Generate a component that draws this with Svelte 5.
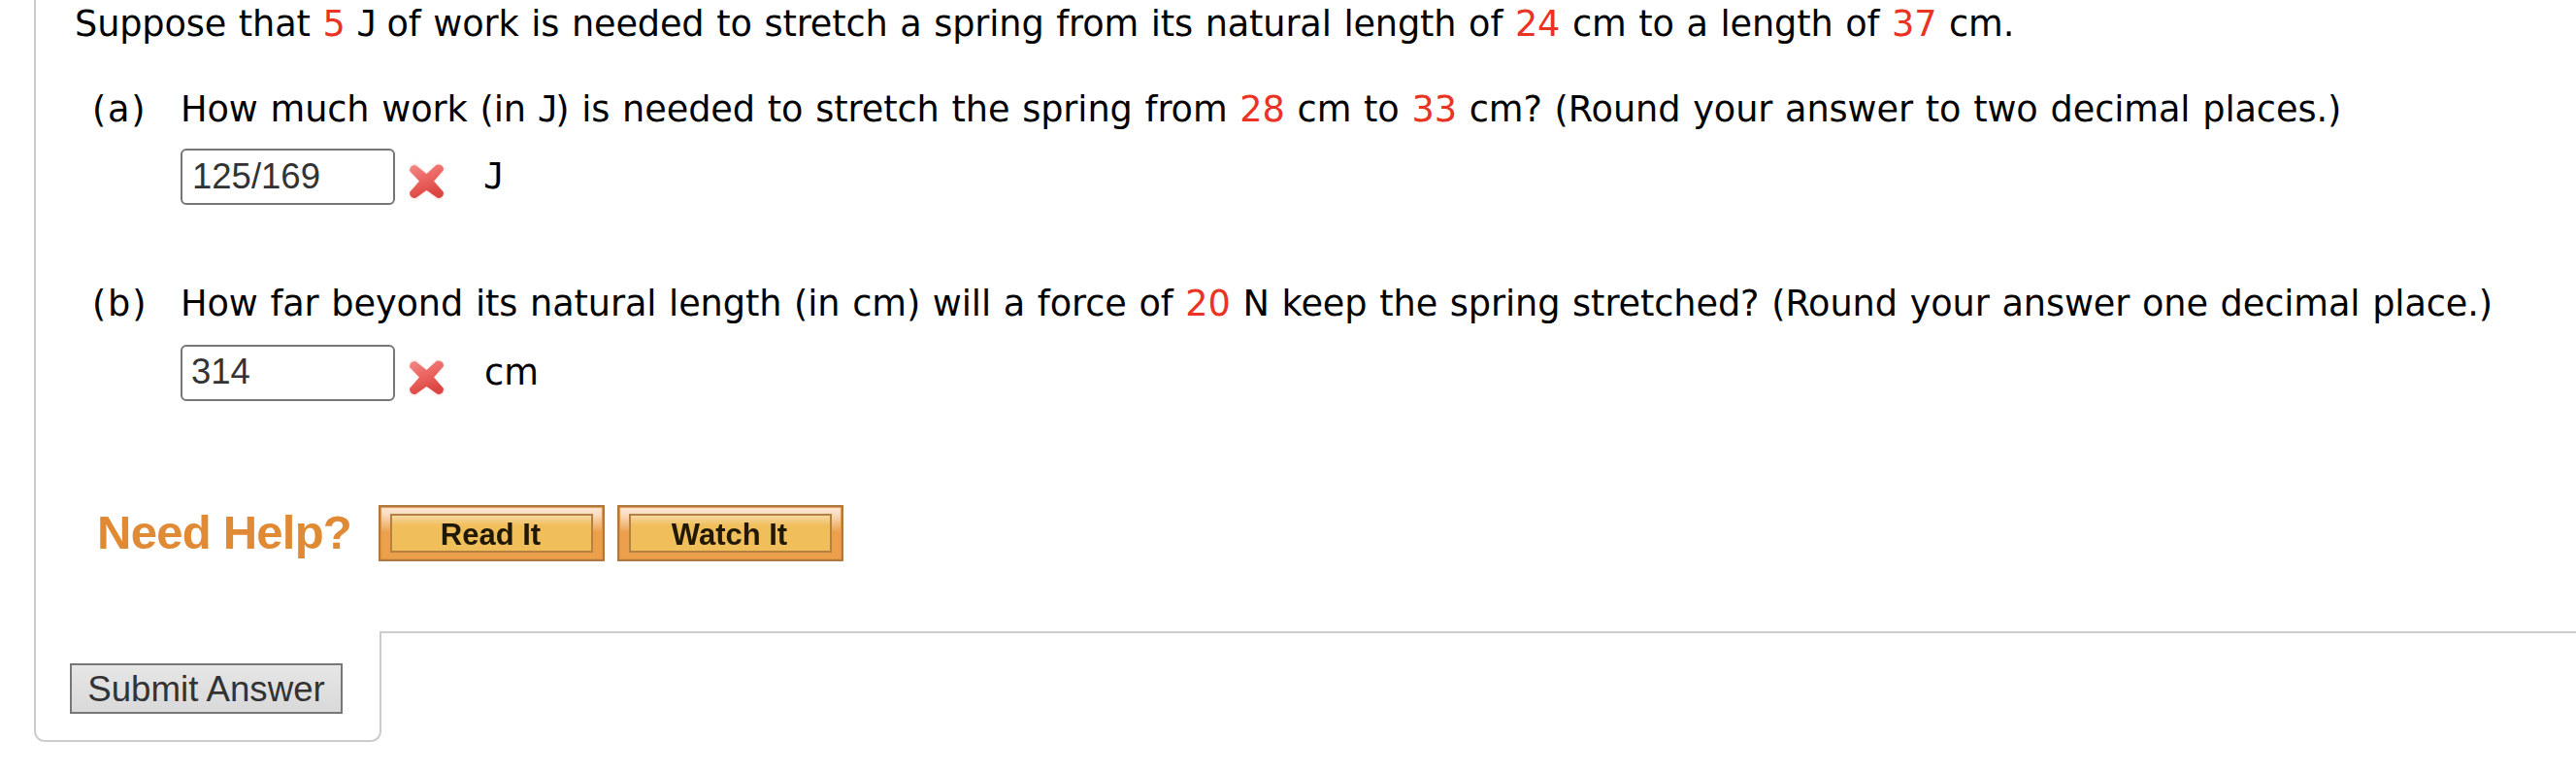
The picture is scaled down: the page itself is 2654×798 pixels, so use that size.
<script>
    let answers = $state({ a: '125/169', b: '314' });
</script>

{#snippet wrong()}
    <svg class="wrong" viewBox="0 0 40 42" aria-label="Incorrect">
        <defs>
            <linearGradient id="cross" x1="0" y1="0" x2="0.35" y2="1">
                <stop offset="0" stop-color="#f08a87" />
                <stop offset="0.5" stop-color="#ec6663" />
                <stop offset="1" stop-color="#dc4642" />
            </linearGradient>
        </defs>
        <path class="wrong-halo" d="M8 8L33 34M33 8L8 34" />
        <path class="wrong-mark" fill="url(#cross)" d="M3 10Q3 4 9 4L20.500 13L31 3.500Q38 3 38 9L28 20.500L38 32Q38 38 32 38L20.500 30L9 38Q3 38 3 32L13 20.500Z" />
    </svg>
{/snippet}

<main class="question">
    <section class="panel">
        <p class="intro">Suppose that <em>5</em> <span class="joule">J</span> of work is needed to stretch a spring from its natural length of <em>24</em> cm to a length of <em>37</em> cm.</p>

        <div class="part part-a">
            <span class="label">(a)</span>
            <div class="body">
                <p class="line-a">How much work (in <span class="joule">J</span>) is needed to stretch the spring from <em>28</em> cm to <em>33</em> cm? (Round your answer to two decimal places.)</p>
                <div class="answer">
                    <input type="text" bind:value={answers.a} aria-label="Answer a">
                    {@render wrong()}
                    <span class="unit"><span class="joule">J</span></span>
                </div>
            </div>
        </div>

        <div class="part part-b">
            <span class="label">(b)</span>
            <div class="body">
                <p class="line-b">How far beyond its natural length (in cm) will a force of <em>20</em> N keep the spring stretched? (Round your answer one decimal place.)</p>
                <div class="answer">
                    <input class="second" type="text" bind:value={answers.b} aria-label="Answer b">
                    {@render wrong()}
                    <span class="unit">cm</span>
                </div>
            </div>
        </div>

        <div class="help">
            <strong class="help-title">Need Help?</strong>
            <button class="help-btn"><span><b>Read It</b></span></button>
            <button class="help-btn"><span><b>Watch It</b></span></button>
        </div>
    </section>

    <div class="footer">
        <div class="tab">
            <button class="submit">Submit Answer</button>
        </div>
        <div class="rule"></div>
    </div>
</main>

<style>
:global(body) {
    background: #fff;
    overflow: hidden;
}

.question {
    box-sizing: border-box;
    height: 798px;
    padding-left: 35px;
    font-family: "DejaVu Sans", Verdana, sans-serif;
    font-size: 36.67px;
    line-height: 44px;
    word-spacing: 1.2px;
    color: #000;
    white-space: nowrap;
}

.panel {
    box-sizing: border-box;
    height: 650px;
    padding: 3px 0 0 39px;
    border-left: 2px solid #ccc;
}

p {
    margin: 0;
    padding-left: 1px;
}

.intro {
    letter-spacing: -0.14px;
}

.line-a {
    letter-spacing: -0.08px;
}

.line-b {
    letter-spacing: -0.1px;
}

em {
    font-style: normal;
    color: #ea3323;
}

/* J with a top bar, narrowed to the width of the text face */
.joule {
    display: inline-block;
    width: 17.5px;
    font-family: "DejaVu Sans Mono", monospace;
    text-indent: -1px;
    letter-spacing: 0;
}

.part {
    display: flex;
    padding-left: 19px;
}

.part-a {
    margin-top: 44px;
}

.part-b {
    margin-top: 80px;
}

.label {
    width: 90px;
    letter-spacing: 1.8px;
}

.answer {
    display: flex;
    height: 58px;
    margin-top: 18px;
}

.part-b .answer {
    margin-top: 20px;
}

input {
    box-sizing: border-box;
    width: 221px;
    height: 58px;
    margin: 0 0 0 1px;
    padding: 0 10px;
    border: 2px solid #767676;
    border-radius: 6px;
    background: #fff;
    font: 36.5px "Liberation Sans", Arial, sans-serif;
    color: #333;
    outline: none;
}

input.second {
    padding: 0 12px 3px 9px;
}

.wrong {
    width: 40px;
    height: 42px;
    margin: 13px 0 0 12px;
}

.wrong-halo {
    fill: none;
    stroke: #fbe3e2;
    stroke-width: 11;
    stroke-linecap: round;
    filter: blur(1px);
}

.wrong-mark {
    filter: blur(0.6px);
}

.unit {
    margin: 7px 0 0 40px;
}

.help {
    display: flex;
    gap: 13px;
    margin-top: 107px;
    font-family: "Liberation Sans", Arial, sans-serif;
    word-spacing: 0;
}

.help-title {
    width: 266px;
    padding-left: 24px;
    box-sizing: border-box;
    margin-top: 6px;
    margin-right: 35px;
    font-size: 49px;
    letter-spacing: -0.75px;
    color: #e08a35;
    filter: blur(0.7px);
}

.help-btn {
    box-sizing: border-box;
    width: 233px;
    height: 58px;
    padding: 7px 10px;
    border: 2px solid #ae7a42;
    background: linear-gradient(#fbe9d8, #f9dcc0 15%, #eda04c 48%, #eda04c);
    box-shadow: inset 0 0 1px 1px #dc9446;
    color: #1f1803;
}

.help-btn span {
    display: block;
    box-sizing: border-box;
    height: 40px;
    border: 2px solid #b58040;
    background: linear-gradient(#f6d9a4, #f1be5c 28%, #f1be5c);
    font: bold 31px/39px "Liberation Sans", Arial, sans-serif;
}

.help-btn b {
    display: block;
    margin-left: -2px;
    filter: blur(0.7px);
}

.footer {
    display: flex;
}

.tab {
    box-sizing: border-box;
    width: 358px;
    height: 114px;
    padding: 33px 0 0 35px;
    border: 2px solid #ccc;
    border-top: 0;
    border-radius: 0 0 11px 11px;
}

.submit {
    display: block;
    box-sizing: border-box;
    width: 281px;
    height: 52px;
    padding: 1px 0 0;
    border: 2px solid #777;
    background: linear-gradient(#e6e6e6, #d9d9d9);
    font: 36.67px "Liberation Sans", Arial, sans-serif;
    color: #333;
}

.rule {
    flex: 1;
    border-top: 2px solid #ccc;
}
</style>
